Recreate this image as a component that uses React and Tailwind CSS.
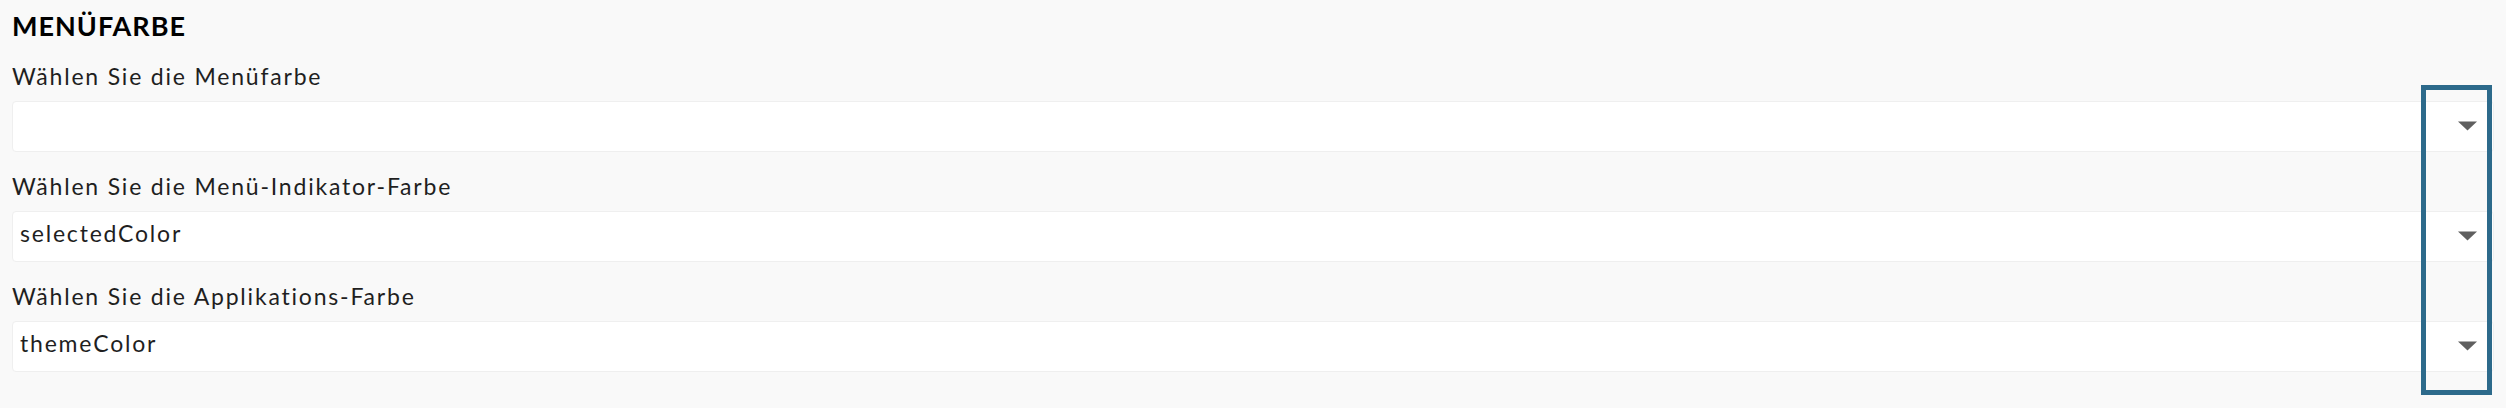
import React from "react";

const fields = [
  { label: "Wählen Sie die Menüfarbe", value: "" },
  { label: "Wählen Sie die Menü-Indikator-Farbe", value: "selectedColor" },
  { label: "Wählen Sie die Applikations-Farbe", value: "themeColor" },
];

function Caret() {
  return (
    <svg width="19" height="10" viewBox="0 0 19 10" className="shrink-0">
      <polygon points="0,0.5 19,0.5 9.5,9.5" fill="#5f5f5f" />
    </svg>
  );
}

export default function App() {
  return (
    <main
      className="relative h-[408px] w-full bg-[#f9f9f9] px-3 pt-[10px]"
      style={{ fontFamily: "Lato, 'Open Sans', sans-serif" }}
    >
      <h1 className="text-[27px] leading-[32px] font-bold tracking-[1px] text-black">
        MENÜFARBE
      </h1>

      <div className="mt-5 flex flex-col">
        {fields.map((f, i) => (
          <div key={i} className={i > 0 ? "mt-5" : ""}>
            <label className="block h-[28px] text-[23px] leading-[28px] tracking-[1.8px] text-[#1f1f1f]">
              {f.label}
            </label>
            <div className="mt-[11px] flex h-[51px] items-start justify-between rounded-[4px] border border-[#efefef] bg-white pl-[7px] pr-[16px] pt-[7px]">
              <span className="h-[28px] text-[23px] leading-[28px] tracking-[1.8px] text-[#1f1f1f]">
                {f.value}
              </span>
              <div className="self-center -mt-[8px]">
                <Caret />
              </div>
            </div>
          </div>
        ))}
      </div>

      {/* highlight box drawn over the carets */}
      <div className="pointer-events-none absolute left-[2421px] top-[85px] h-[310px] w-[71px] border-[5px] border-[#2d6a8b]" />
    </main>
  );
}
